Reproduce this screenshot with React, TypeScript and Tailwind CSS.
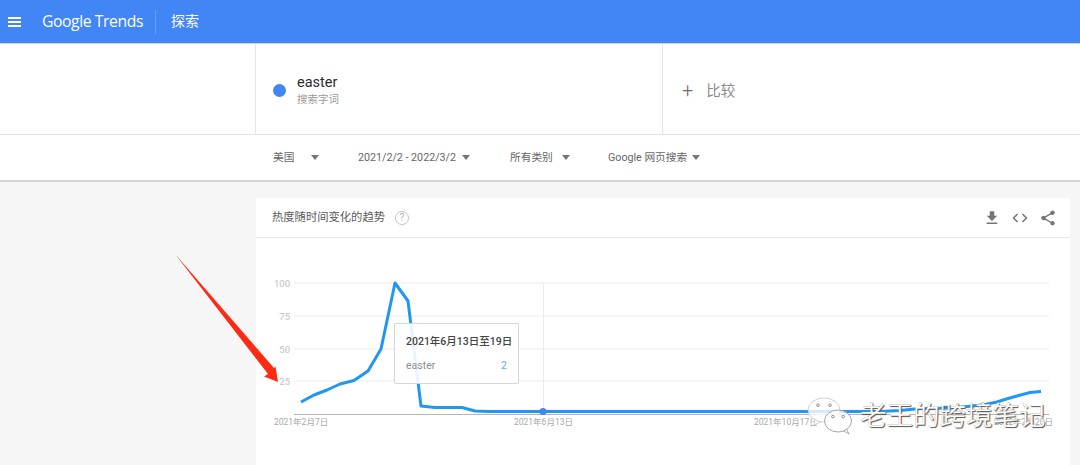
const FONT = "font-['Roboto','Noto_Sans_CJK_SC',sans-serif]";

const LINE_POINTS =
  "301,402 314,395 327,390 340,384 354,380.5 368,371 381,349 395,283 408,301 421,406 435,407.5 448,407.5 462,407.5 475,411 489,411.5 880,411.5 900,410.5 920,408.5 950,408 973,406 985,404.5 997,402 1008,398.5 1017,396 1030,392.5 1041,391.5";

const GRID = [
  { label: "100", y: 283 },
  { label: "75", y: 316 },
  { label: "50", y: 349 },
  { label: "25", y: 381 },
];

const FILTERS = [
  { label: "美国", width: "w-[85px]", gap: "ml-[17px]" },
  { label: "2021/2/2 - 2022/3/2", width: "w-[152px]", gap: "ml-[6px]" },
  { label: "所有类别", width: "w-[98px]", gap: "ml-[9px]" },
  { label: "Google 网页搜索", width: "w-[110px]", gap: "ml-[5px]" },
];

function Caret() {
  return <span className="h-0 w-0 border-x-[4px] border-t-[5px] border-x-transparent border-t-[#757575]" />;
}

function MaterialIcon({ d, className }: { d: string; className: string }) {
  return (
    <svg viewBox="0 0 24 24" className={className} fill="#757575">
      <path d={d} />
    </svg>
  );
}

function TrendChart() {
  return (
    <svg viewBox="256 238 814 227" className="block h-[227px] w-[814px]">
      {GRID.map((g) => (
        <g key={g.label}>
          <line x1="294" x2="1049" y1={g.y} y2={g.y} stroke="#ececec" />
          <text x="290" y={g.y + 3.5} textAnchor="end" fontSize="9.5" fill="#c0c0c0" fontFamily="Roboto">
            {g.label}
          </text>
        </g>
      ))}
      <line x1="294" x2="1049" y1="414.5" y2="414.5" stroke="#b5b5b5" />
      <line x1="543.5" x2="543.5" y1="283" y2="411" stroke="#ececec" />
      <polyline points={LINE_POINTS} fill="none" stroke="#2196f3" strokeWidth="3" strokeLinejoin="round" />
      <circle cx="543" cy="411.5" r="3.5" fill="#4285f4" />
      {[
        { x: 274, t: "2021年2月7日" },
        { x: 514, t: "2021年6月13日" },
        { x: 754, t: "2021年10月17日" },
        { x: 994, t: "2022年2月20日" },
      ].map((l) => (
        <text key={l.x} x={l.x} y="424.5" fontSize="8.5" fill="#a8a8a8" fontFamily="Roboto, 'Noto Sans CJK SC'">
          {l.t}
        </text>
      ))}
    </svg>
  );
}

function Bubble({ x, y, w, h, stroke }: { x: number; y: number; w: number; h: number; stroke: string }) {
  return (
    <g>
      <ellipse cx={x} cy={y} rx={w} ry={h} fill="#ffffff" fillOpacity="0.8" stroke={stroke} strokeWidth="0.8" />
      <circle cx={x - w * 0.38} cy={y - h * 0.4} r="1.3" fill="none" stroke="#777" strokeWidth="0.8" />
      <circle cx={x + w * 0.38} cy={y - h * 0.4} r="1.3" fill="none" stroke="#777" strokeWidth="0.8" />
    </g>
  );
}

export default function App() {
  return (
    <div className={`${FONT} relative h-[465px] w-[1080px] overflow-hidden bg-[#f6f6f6]`}>
      <header className="flex h-[44px] items-center border-b border-[#cfd3d8] bg-[#4285f4] text-white">
        <div className="ml-[8px] flex w-[13px] flex-col gap-[2px]">
          <span className="h-[2px] bg-white" />
          <span className="h-[2px] bg-white" />
          <span className="h-[2px] bg-white" />
        </div>
        <span className="ml-[21px] font-['Open_Sans',sans-serif] text-[15.7px] leading-none tracking-[-0.4px]">
          Google Trends
        </span>
        <span className="ml-[12px] h-[24px] w-px bg-[#6a9ff6]" />
        <span className="ml-[15px] text-[14px]">探索</span>
      </header>

      <section className="grid h-[91px] grid-cols-[255px_408px_1fr] border-b border-[#e4e4e4] bg-white">
        <div />
        <div className="flex items-center border-x border-[#e4e4e4] pt-[2px] pl-[17px]">
          <span className="h-[13px] w-[13px] rounded-full bg-[#4285f4]" />
          <div className="ml-[11px] pt-[2px]">
            <div className="text-[14.5px] leading-[18px] text-[#2c2c2c]">easter</div>
            <div className="text-[10.5px] leading-[16px] text-[#9a9a9a]">搜索字词</div>
          </div>
        </div>
        <div className="flex items-center pl-[19px] pt-[2px] text-[#8a8a8a]">
          <span className="text-[20px] font-light leading-none text-[#6f6f6f]">+</span>
          <span className="ml-[13px] pt-[4px] text-[14.5px]">比较</span>
        </div>
      </section>

      <section className="flex h-[47px] items-center border-b-2 border-[#d4d4d4] bg-white pl-[273px] pt-[1px] text-[10.7px] text-[#666666]">
        {FILTERS.map((f) => (
          <div key={f.label} className={`flex items-center ${f.width}`}>
            <span>{f.label}</span>
            <span className={`flex ${f.gap}`}>
              <Caret />
            </span>
          </div>
        ))}
      </section>

      <main className="ml-[256px] mt-[16px] w-[814px] bg-white">
        <div className="flex h-[40px] items-center border-b border-[#e8e8e8] pl-[16px] pr-[13px] pt-[1px]">
          <span className="text-[11.3px] text-[#5a5a5a]">热度随时间变化的趋势</span>
          <span className="ml-[10px] flex h-[14px] w-[14px] items-center justify-center rounded-full border-[1.5px] border-[#c4c4c4] text-[10px] leading-none text-[#b0b0b0]">
            ?
          </span>
          <div className="ml-auto flex items-center gap-[10px]">
            <MaterialIcon className="h-[18px] w-[18px]" d="M19 9h-4V3H9v6H5l7 7 7-7zM5 18v2h14v-2H5z" />
            <MaterialIcon
              className="h-[18px] w-[18px]"
              d="M9.4 16.6L4.8 12l4.6-4.6L8 6l-6 6 6 6 1.4-1.4zm5.2 0l4.6-4.6-4.6-4.6L16 6l6 6-6 6-1.4-1.4z"
            />
            <MaterialIcon
              className="h-[18px] w-[18px]"
              d="M18 16.08c-.76 0-1.44.3-1.96.77L8.91 12.7c.05-.23.09-.46.09-.7s-.04-.47-.09-.7l7.05-4.11c.54.5 1.25.81 2.04.81 1.66 0 3-1.34 3-3s-1.34-3-3-3-3 1.34-3 3c0 .24.04.47.09.7L8.04 9.81C7.5 9.31 6.79 9 6 9c-1.66 0-3 1.34-3 3s1.34 3 3 3c.79 0 1.5-.31 2.04-.81l7.12 4.16c-.05.21-.08.43-.08.65 0 1.61 1.31 2.92 2.92 2.92 1.61 0 2.92-1.31 2.92-2.92s-1.31-2.92-2.92-2.92z"
            />
          </div>
        </div>
        <TrendChart />
      </main>

      {/* tooltip */}
      <div className="absolute left-[394px] top-[323px] h-[61px] w-[125px] rounded-[2px] border border-[#d6d6d6] bg-white/90 pl-[11px] pr-[11px] pt-[11px]">
        <div className="whitespace-nowrap text-[10.5px] font-medium leading-[14px] text-[#444444]">2021年6月13日至19日</div>
        <div className="mt-[10px] flex items-center justify-between text-[10.5px] leading-[14px]">
          <span className="text-[#8f8f8f]">easter</span>
          <span className="text-[#6ea2f7]">2</span>
        </div>
      </div>

      {/* red arrow drawn over the screenshot */}
      <svg className="absolute left-[170px] top-[250px]" width="115" height="140" viewBox="170 250 115 140">
        <polygon points="175,254 274,368 275.5,366.5 278,382 264,376.5 268,374" fill="#ff2a14" />
      </svg>

      {/* watermark */}
      <div className="absolute left-[806px] top-[395px] flex items-start">
        <svg width="50" height="42" viewBox="806 395 50 42">
          <path d="M815 419 L814 425 L822 421" fill="#ffffff" stroke="#c4c4c4" strokeWidth="0.8" />
          <Bubble x={824} y={410} w={16} h={12} stroke="#c4c4c4" />
          <path d="M842 430 L849 434 L846 428" fill="#ffffff" stroke="#9a9a9a" strokeWidth="0.8" />
          <Bubble x={838} y={421} w={13.5} h={11} stroke="#8f8f8f" />
        </svg>
        <span className="ml-[4px] mt-[8px] text-[26.5px] leading-none text-white [-webkit-text-stroke:0.2px_#8a8a8a] [text-shadow:1px_1px_1px_#555555]">
          老王的跨境笔记
        </span>
      </div>
    </div>
  );
}
